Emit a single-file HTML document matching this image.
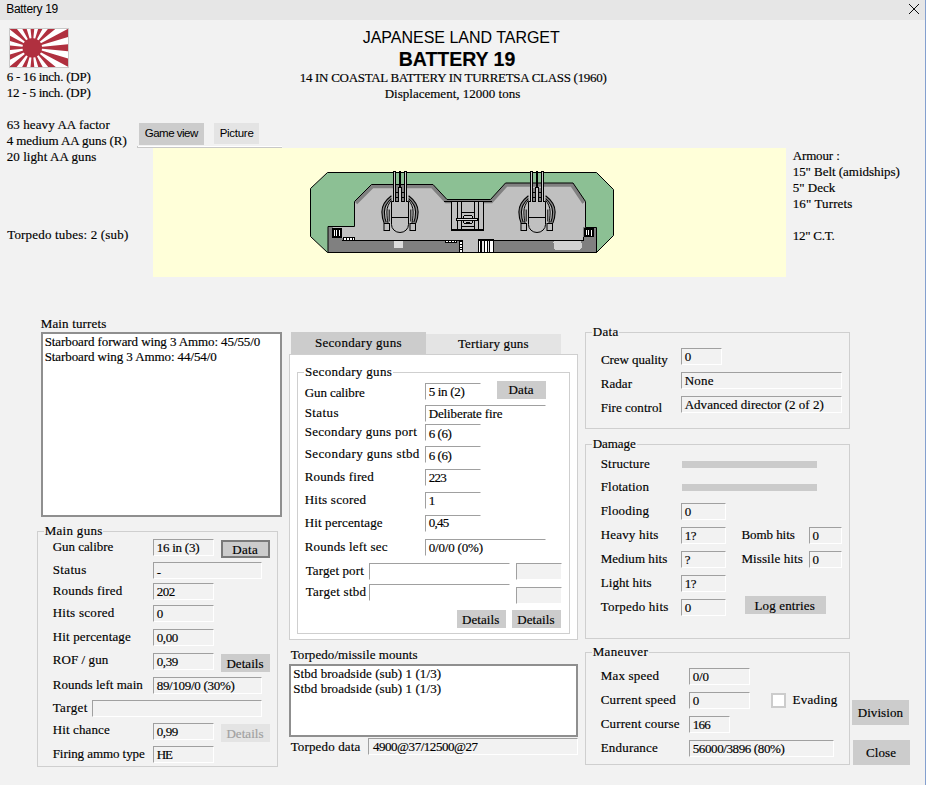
<!DOCTYPE html>
<html><head><meta charset="utf-8"><title>Battery 19</title>
<style>
html,body{margin:0;padding:0;}
body{width:926px;height:785px;overflow:hidden;background:#f2f2f2;}
#win{position:relative;width:926px;height:785px;background:#f2f2f2;overflow:hidden;}
#win div{position:absolute;box-sizing:border-box;}
.t{white-space:pre;color:#000;-webkit-text-stroke:0.16px currentColor;}
.s13{font:13px/16px 'Liberation Serif',serif;height:16px;}
.a12{font:12px/16px 'Liberation Sans',sans-serif;height:16px;-webkit-text-stroke:0;}
.a115{font:11.5px/16px 'Liberation Sans',sans-serif;height:16px;-webkit-text-stroke:0;}
.a16{font:16px/20px 'Liberation Sans',sans-serif;height:20px;-webkit-text-stroke:0;}
.ab20{font:bold 19.5px/24px 'Liberation Sans',sans-serif;height:24px;}
.titlebar{background:#e6e6e6;}
.rborder{background:#84a0cf;}
.grp{border:1px solid #cfcfcf;}
.gap{}
.fld{border:1px solid;border-color:#a0a0a0 #fff #fff #a0a0a0;background:#f2f2f2;}
.fldw{border:1px solid;border-color:#a0a0a0 #fff #fff #a0a0a0;background:#fff;}
.btn{background:#cccccc;}
.btnl{background:#e4e4e4;}
.btnd{background:#cccccc;border:2px solid #7a7a7a;}
.list{background:#fff;border:2px solid #8f8f8f;}
.pane{background:#fff;border:1px solid #cfcfcf;}
.tabsel{background:#cccccc;}
.tab{background:#e4e4e4;}
.bar{background:#cbcbcb;}
.chk{background:#fff;border:2px solid #cccccc;}
.yel{background:#ffffd9;}
.ln{background:#d4d4d4;}
</style></head>
<body>
<div id="win">
<div class="titlebar" style="left:0px;top:0px;width:926px;height:20px;"></div>
<div class="rborder" style="left:925px;top:0px;width:1px;height:785px;"></div>
<div class="btn" style="left:139px;top:123px;width:65px;height:22px;"></div>
<div class="btnl" style="left:214px;top:123px;width:45px;height:21px;"></div>
<div class="ln" style="left:138px;top:146px;width:144px;height:1px;background:#fff;"></div>
<div class="ln" style="left:137px;top:147px;width:145px;height:1px;background:#c8c8c8;"></div>
<div class="ln" style="left:137px;top:146px;width:1px;height:2px;background:#c8c8c8;"></div>
<div class="yel" style="left:153px;top:148px;width:633px;height:129px;"></div>
<div class="list" style="left:41px;top:332px;width:241px;height:185px;"></div>
<div class="list" style="left:289px;top:664px;width:289px;height:73px;"></div>
<div class="grp" style="left:37px;top:531px;width:241px;height:236px;"></div>
<div class="gap" style="left:43.5px;top:530px;width:59.5px;height:3px;background:#f2f2f2;"></div>
<div class="fld" style="left:153px;top:539px;width:61px;height:17px;"></div>
<div class="fld" style="left:153px;top:583px;width:61px;height:17px;"></div>
<div class="fld" style="left:153px;top:605px;width:61px;height:17px;"></div>
<div class="fld" style="left:153px;top:629px;width:61px;height:17px;"></div>
<div class="fld" style="left:153px;top:653px;width:61px;height:17px;"></div>
<div class="fld" style="left:153px;top:723px;width:61px;height:17px;"></div>
<div class="fld" style="left:153px;top:746px;width:61px;height:17px;"></div>
<div class="fld" style="left:153px;top:562px;width:109px;height:17px;"></div>
<div class="fld" style="left:153px;top:677px;width:109px;height:17px;"></div>
<div class="fld" style="left:92px;top:700px;width:170px;height:17px;"></div>
<div class="btnd" style="left:221px;top:540px;width:49px;height:18px;"></div>
<div class="btn" style="left:221px;top:654px;width:49px;height:18px;"></div>
<div class="btnl" style="left:221px;top:724px;width:49px;height:18px;"></div>
<div class="tabsel" style="left:291px;top:332px;width:135px;height:22px;"></div>
<div class="tab" style="left:426px;top:334px;width:135px;height:20px;"></div>
<div class="pane" style="left:289px;top:354px;width:289px;height:286px;"></div>
<div class="grp" style="left:297px;top:372px;width:273px;height:262px;"></div>
<div class="gap" style="left:303.5px;top:371px;width:89px;height:3px;background:#fff;"></div>
<div class="fldw" style="left:425px;top:383px;width:56px;height:17px;"></div>
<div class="fldw" style="left:425px;top:424px;width:56px;height:17px;"></div>
<div class="fldw" style="left:425px;top:446px;width:56px;height:17px;"></div>
<div class="fldw" style="left:425px;top:469px;width:56px;height:17px;"></div>
<div class="fldw" style="left:425px;top:492px;width:56px;height:17px;"></div>
<div class="fldw" style="left:425px;top:515px;width:56px;height:17px;"></div>
<div class="fldw" style="left:425px;top:405px;width:120.5px;height:17px;"></div>
<div class="fldw" style="left:425px;top:539px;width:120.5px;height:17px;"></div>
<div class="fldw" style="left:369px;top:563px;width:141px;height:17px;"></div>
<div class="fldw" style="left:369px;top:584px;width:141px;height:17px;"></div>
<div class="fld" style="left:516px;top:563px;width:45.5px;height:17px;"></div>
<div class="fld" style="left:516px;top:587px;width:45.5px;height:17px;"></div>
<div class="btn" style="left:497px;top:381px;width:48.5px;height:18px;"></div>
<div class="btn" style="left:457px;top:610px;width:49px;height:17.5px;"></div>
<div class="btn" style="left:512px;top:610px;width:49px;height:17.5px;"></div>
<div class="fld" style="left:368px;top:738px;width:210px;height:17px;"></div>
<div class="grp" style="left:585px;top:332px;width:265px;height:97px;"></div>
<div class="gap" style="left:591.5px;top:331px;width:27.5px;height:3px;background:#f2f2f2;"></div>
<div class="grp" style="left:585px;top:444px;width:265px;height:194.5px;"></div>
<div class="gap" style="left:591.5px;top:443px;width:45px;height:3px;background:#f2f2f2;"></div>
<div class="grp" style="left:585px;top:652px;width:265px;height:113px;"></div>
<div class="gap" style="left:591.5px;top:651px;width:57px;height:3px;background:#f2f2f2;"></div>
<div class="fld" style="left:681px;top:348px;width:41px;height:17px;"></div>
<div class="fld" style="left:681px;top:372px;width:161px;height:17px;"></div>
<div class="fld" style="left:681px;top:396px;width:161px;height:17px;"></div>
<div class="bar" style="left:682px;top:460.5px;width:135px;height:7px;"></div>
<div class="bar" style="left:682px;top:483.5px;width:135px;height:7px;"></div>
<div class="fld" style="left:681px;top:503px;width:44.5px;height:17px;"></div>
<div class="fld" style="left:681px;top:527px;width:44.5px;height:17px;"></div>
<div class="fld" style="left:681px;top:551px;width:44.5px;height:17px;"></div>
<div class="fld" style="left:681px;top:575px;width:44.5px;height:17px;"></div>
<div class="fld" style="left:681px;top:599px;width:44.5px;height:17px;"></div>
<div class="fld" style="left:808.5px;top:527px;width:33.5px;height:17px;"></div>
<div class="fld" style="left:808.5px;top:551px;width:33.5px;height:17px;"></div>
<div class="btn" style="left:744.5px;top:596px;width:81.5px;height:17.5px;"></div>
<div class="fld" style="left:689px;top:668px;width:61px;height:17px;"></div>
<div class="fld" style="left:689px;top:692px;width:61px;height:17px;"></div>
<div class="fld" style="left:689px;top:716px;width:41px;height:17px;"></div>
<div class="fld" style="left:689px;top:740px;width:145px;height:17px;"></div>
<div class="chk" style="left:771px;top:693px;width:15px;height:15px;"></div>
<div class="btn" style="left:852px;top:700px;width:57px;height:25px;"></div>
<div class="btn" style="left:853px;top:740px;width:57px;height:25px;"></div>
<svg style="position:absolute;left:9px;top:28px" width="60" height="40" viewBox="9 28 60 40">
<rect x="9" y="28" width="60" height="40" fill="#c9c9c9"/>
<svg x="10" y="29" width="58" height="38" viewBox="10 29 58 38">
<rect x="10" y="29" width="58" height="38" fill="#fff"/>
<g fill="#b0303f"><path d="M32.4 47.8L112.0 40.0L112.0 55.6ZM32.4 47.8L109.0 71.0L103.0 85.5ZM32.4 47.8L94.2 98.6L83.2 109.6ZM32.4 47.8L70.1 118.4L55.6 124.4ZM32.4 47.8L40.2 127.4L24.6 127.4ZM32.4 47.8L9.2 124.4L-5.3 118.4ZM32.4 47.8L-18.4 109.6L-29.4 98.6ZM32.4 47.8L-38.2 85.5L-44.2 71.0ZM32.4 47.8L-47.2 55.6L-47.2 40.0ZM32.4 47.8L-44.2 24.6L-38.2 10.1ZM32.4 47.8L-29.4 -3.0L-18.4 -14.0ZM32.4 47.8L-5.3 -22.8L9.2 -28.8ZM32.4 47.8L24.6 -31.8L40.2 -31.8ZM32.4 47.8L55.6 -28.8L70.1 -22.8ZM32.4 47.8L83.2 -14.0L94.2 -3.0ZM32.4 47.8L103.0 10.1L109.0 24.6Z"/><circle cx="32.3" cy="47.8" r="9.9"/></g>
</svg>
</svg>
<svg id="closex" style="position:absolute;left:905px;top:0px" width="18" height="18" viewBox="905 0 18 18"><path d="M909 4L919 14M919 4L909 14" stroke="#000" stroke-width="0.95" fill="none"/></svg>
<svg style="position:absolute;left:300px;top:164px" width="320" height="96" viewBox="300 164 320 96">
<!-- body -->
<path d="M328 226.5H354.5V201.5L371.5 184.5H433L447 199.5H490.5L505.5 183H573L585.5 201.5V227.5H596.5V252.5H328Z" fill="#c0c0c0"/>
<path d="M354.5 201.5L371.5 184.5H433L447 199.5H490.5L505.5 183H573L585.5 201.5" fill="none" stroke="#808080" stroke-width="7.6"/>
<rect x="328" y="240" width="269" height="13" fill="#808080"/>
<rect x="328" y="226" width="5" height="27" fill="#808080"/>
<rect x="583" y="227" width="14" height="26" fill="#808080"/>
<!-- green emplacement with body-shaped hole -->
<path d="M327.5 172.5H596.5L613.5 189.5V235.5L596.5 252.5H327.5L310.5 236.5V188.5Z M328 226.5H354.5V201.5L371.5 184.5H433L447 199.5H490.5L505.5 183H573L585.5 201.5V227.5H596.5V252.5H328Z" fill="#8cc094" fill-rule="evenodd" stroke="#000" stroke-width="1"/>
<g shape-rendering="crispEdges">
 <!-- base top line -->
 <rect x="342" y="240" width="121" height="1" fill="#000"/>
 <rect x="494" y="240" width="90" height="1" fill="#000"/>
 <rect x="583" y="237" width="1" height="4" fill="#000"/>
 <!-- central passage -->
 <rect x="463" y="240" width="15" height="12" fill="#c0c0c0"/>
 <rect x="462" y="240" width="1" height="12" fill="#000"/>
 <rect x="332" y="238" width="11" height="2" fill="#808080"/>
 <!-- left vent -->
 <rect x="332" y="228" width="10" height="10" fill="#000"/>
 <rect x="334" y="230" width="1" height="6" fill="#fff"/><rect x="336" y="230" width="1" height="6" fill="#fff"/><rect x="339" y="230" width="1" height="6" fill="#fff"/>
 <!-- small squares -->
 <rect x="343" y="237" width="12" height="4" fill="#000"/>
 <rect x="344" y="238" width="2" height="2" fill="#fff"/><rect x="347" y="238" width="2" height="2" fill="#fff"/><rect x="350" y="238" width="2" height="2" fill="#fff"/><rect x="352.6" y="238" width="1.6" height="2" fill="#fff"/>
 <!-- light square in base -->
 <rect x="393.5" y="241" width="9" height="6.5" fill="#dcdcdc"/>
 <!-- center dashes -->
 <rect x="445" y="240" width="12" height="3" fill="#000"/>
 <rect x="446" y="241" width="2" height="1" fill="#fff"/><rect x="449" y="241" width="2" height="1" fill="#fff"/><rect x="452" y="241" width="2" height="1" fill="#fff"/><rect x="455" y="241" width="1" height="1" fill="#fff"/>
 <rect x="459" y="240" width="4" height="12" fill="#000"/>
 <rect x="460" y="242" width="2" height="2" fill="#fff"/><rect x="460" y="245" width="2" height="2" fill="#fff"/><rect x="460" y="248" width="2" height="1" fill="#fff"/><rect x="460" y="250" width="2" height="2" fill="#fff"/>
 <!-- stairs -->
 <rect x="478" y="239" width="16" height="13" fill="#000"/>
 <rect x="479" y="241" width="1" height="11" fill="#fff"/><rect x="482" y="241" width="2" height="11" fill="#e8e8e8"/><rect x="485" y="241" width="2" height="11" fill="#fff"/><rect x="488" y="241" width="1" height="11" fill="#e8e8e8"/><rect x="490" y="241" width="3" height="11" fill="#fff"/>
 <!-- right light rect -->
 <rect x="553.5" y="241" width="28" height="8.5" rx="1.5" fill="#d2d2d2"/>
 <!-- right vent -->
 <rect x="584" y="228" width="10" height="9" fill="#000"/>
 <rect x="586" y="230" width="1" height="5" fill="#fff"/><rect x="588" y="230" width="1" height="5" fill="#fff"/><rect x="591" y="230" width="1" height="6" fill="#fff"/>
 <!-- conning tower -->
 <rect x="444" y="201" width="48" height="1" fill="#000"/>
 <rect x="451" y="202" width="33" height="29" fill="#000"/>
 <rect x="452" y="202" width="5" height="27" fill="#c0c0c0"/>
 <rect x="458" y="202" width="3" height="27" fill="#c0c0c0"/>
 <rect x="475" y="202" width="3" height="27" fill="#c0c0c0"/>
 <rect x="479" y="202" width="4" height="27" fill="#c0c0c0"/>
 <rect x="462" y="202" width="12" height="10" fill="#c0c0c0"/>
 <rect x="462" y="213" width="12" height="13" fill="#c0c0c0"/>
 <rect x="462" y="227" width="12" height="2" fill="#c0c0c0"/>
 <rect x="463" y="215" width="10" height="9" fill="#000"/>
 <rect x="464" y="216" width="8" height="2" fill="#c8c8c8"/>
 <rect x="464" y="221" width="8" height="2" fill="#c0c0c0"/>
 <rect x="466" y="222" width="4" height="1" fill="#000"/>
 <rect x="463" y="215" width="1" height="1" fill="#c0c0c0"/><rect x="472" y="215" width="1" height="1" fill="#c0c0c0"/>
 <rect x="463" y="223" width="1" height="1" fill="#c0c0c0"/><rect x="472" y="223" width="1" height="1" fill="#c0c0c0"/>
 <rect x="456" y="218" width="22" height="3" fill="#000"/>
 <rect x="457" y="219" width="20" height="1" fill="#dcdcdc"/>
</g>
<g transform="translate(400 0)">
 <path d="M-8.6 195.8 C-14.2 200,-18.2 205.5,-18.1 212 C-18 217,-17.3 220,-15.9 223 L-13.7 222.5 C-15 219.5,-15.6 216.5,-15.6 212 C-15.6 206.5,-12.6 202,-8.6 198.6 Z" fill="#8a8a8a" stroke="none"/>
 <path d="M-8.6 195.8 C-14.2 200,-18.2 205.5,-18.1 212 C-18 217,-17.3 220,-15.9 223" fill="none" stroke="#000" stroke-width="1.1"/>
 <path d="M-8.6 198.6 C-12.6 202,-15.6 206.5,-15.6 212 C-15.6 216.5,-15 219.5,-13.7 222.5" fill="none" stroke="#000" stroke-width="1.1"/>
 <path d="M-8.6 200.2 C-11 203,-13.2 207,-13.1 212 C-13 216.5,-12.7 220,-12 223" fill="none" stroke="#000" stroke-width="1"/>
 <path d="M-10.8 209.5 V221.5" fill="none" stroke="#000" stroke-width="1"/>
 <path d="M8.6 195.8 C14.2 200,18.2 205.5,18.1 212 C18 217,17.3 220,15.9 223 L13.7 222.5 C15 219.5,15.6 216.5,15.6 212 C15.6 206.5,12.6 202,8.6 198.6 Z" fill="#8a8a8a" stroke="none"/>
 <path d="M8.6 195.8 C14.2 200,18.2 205.5,18.1 212 C18 217,17.3 220,15.9 223" fill="none" stroke="#000" stroke-width="1.1"/>
 <path d="M8.6 198.6 C12.6 202,15.6 206.5,15.6 212 C15.6 216.5,15 219.5,13.7 222.5" fill="none" stroke="#000" stroke-width="1.1"/>
 <path d="M8.6 200.2 C11 203,13.2 207,13.1 212 C13 216.5,12.7 220,12 223" fill="none" stroke="#000" stroke-width="1"/>
 <path d="M10.8 209.5 V221.5" fill="none" stroke="#000" stroke-width="1"/>
 <rect x="-16" y="223.5" width="5.5" height="7" fill="#c0c0c0" stroke="#000" stroke-width="1"/>
 <rect x="10" y="223.5" width="5.5" height="7" fill="#c0c0c0" stroke="#000" stroke-width="1"/>
 <path d="M-8.5 201.5H8.5V224.5A8.5 8 0 0 1 -8.5 224.5Z" fill="#c0c0c0" stroke="#000" stroke-width="1"/>
 <path d="M-8.5 217.5H8.5" stroke="#000" stroke-width="1"/>
 <g shape-rendering="crispEdges">
 <rect x="-7" y="171" width="3" height="30.5" fill="#000"/><rect x="-6" y="172" width="1" height="29.5" fill="#c8c8c8"/>
 <rect x="-1" y="171" width="2" height="17" fill="#000"/>
 <rect x="-2" y="187" width="4" height="14.5" fill="#000"/><rect x="-1" y="188" width="2" height="13.5" fill="#c8c8c8"/>
 <rect x="4" y="171" width="3" height="30.5" fill="#000"/><rect x="5" y="172" width="1" height="29.5" fill="#c8c8c8"/>
 <rect x="-4" y="188" width="2" height="13" fill="#808080"/><rect x="2" y="188" width="2" height="13" fill="#808080"/>
 <rect x="-4" y="192" width="2" height="1" fill="#000"/><rect x="2" y="192" width="2" height="1" fill="#000"/>
 <rect x="-4" y="197" width="2" height="1" fill="#000"/><rect x="2" y="197" width="2" height="1" fill="#000"/>
 </g>
</g>
<g transform="translate(537 0)">
 <path d="M-8.6 195.8 C-14.2 200,-18.2 205.5,-18.1 212 C-18 217,-17.3 220,-15.9 223 L-13.7 222.5 C-15 219.5,-15.6 216.5,-15.6 212 C-15.6 206.5,-12.6 202,-8.6 198.6 Z" fill="#8a8a8a" stroke="none"/>
 <path d="M-8.6 195.8 C-14.2 200,-18.2 205.5,-18.1 212 C-18 217,-17.3 220,-15.9 223" fill="none" stroke="#000" stroke-width="1.1"/>
 <path d="M-8.6 198.6 C-12.6 202,-15.6 206.5,-15.6 212 C-15.6 216.5,-15 219.5,-13.7 222.5" fill="none" stroke="#000" stroke-width="1.1"/>
 <path d="M-8.6 200.2 C-11 203,-13.2 207,-13.1 212 C-13 216.5,-12.7 220,-12 223" fill="none" stroke="#000" stroke-width="1"/>
 <path d="M-10.8 209.5 V221.5" fill="none" stroke="#000" stroke-width="1"/>
 <path d="M8.6 195.8 C14.2 200,18.2 205.5,18.1 212 C18 217,17.3 220,15.9 223 L13.7 222.5 C15 219.5,15.6 216.5,15.6 212 C15.6 206.5,12.6 202,8.6 198.6 Z" fill="#8a8a8a" stroke="none"/>
 <path d="M8.6 195.8 C14.2 200,18.2 205.5,18.1 212 C18 217,17.3 220,15.9 223" fill="none" stroke="#000" stroke-width="1.1"/>
 <path d="M8.6 198.6 C12.6 202,15.6 206.5,15.6 212 C15.6 216.5,15 219.5,13.7 222.5" fill="none" stroke="#000" stroke-width="1.1"/>
 <path d="M8.6 200.2 C11 203,13.2 207,13.1 212 C13 216.5,12.7 220,12 223" fill="none" stroke="#000" stroke-width="1"/>
 <path d="M10.8 209.5 V221.5" fill="none" stroke="#000" stroke-width="1"/>
 <rect x="-16" y="223.5" width="5.5" height="7" fill="#c0c0c0" stroke="#000" stroke-width="1"/>
 <rect x="10" y="223.5" width="5.5" height="7" fill="#c0c0c0" stroke="#000" stroke-width="1"/>
 <path d="M-8.5 201.5H8.5V224.5A8.5 8 0 0 1 -8.5 224.5Z" fill="#c0c0c0" stroke="#000" stroke-width="1"/>
 <path d="M-8.5 217.5H8.5" stroke="#000" stroke-width="1"/>
 <g shape-rendering="crispEdges">
 <rect x="-7" y="171" width="3" height="30.5" fill="#000"/><rect x="-6" y="172" width="1" height="29.5" fill="#c8c8c8"/>
 <rect x="-1" y="171" width="2" height="17" fill="#000"/>
 <rect x="-2" y="187" width="4" height="14.5" fill="#000"/><rect x="-1" y="188" width="2" height="13.5" fill="#c8c8c8"/>
 <rect x="4" y="171" width="3" height="30.5" fill="#000"/><rect x="5" y="172" width="1" height="29.5" fill="#c8c8c8"/>
 <rect x="-4" y="188" width="2" height="13" fill="#808080"/><rect x="2" y="188" width="2" height="13" fill="#808080"/>
 <rect x="-4" y="192" width="2" height="1" fill="#000"/><rect x="2" y="192" width="2" height="1" fill="#000"/>
 <rect x="-4" y="197" width="2" height="1" fill="#000"/><rect x="2" y="197" width="2" height="1" fill="#000"/>
 </g>
</g>
</svg>

<div class="t a12" style="left:6.20px;top:1px;letter-spacing:-0.289px;">Battery 19</div>
<div class="t s13" style="left:6.70px;top:69px;letter-spacing:-0.228px;">6 - 16 inch. (DP)</div>
<div class="t s13" style="left:6.70px;top:85px;letter-spacing:-0.228px;">12 - 5 inch. (DP)</div>
<div class="t s13" style="left:6.70px;top:117px;letter-spacing:0.097px;">63 heavy AA factor</div>
<div class="t s13" style="left:6.70px;top:133px;letter-spacing:-0.065px;">4 medium AA guns (R)</div>
<div class="t s13" style="left:6.70px;top:149px;letter-spacing:0.073px;">20 light AA guns</div>
<div class="t s13" style="left:7.20px;top:227px;letter-spacing:0.188px;">Torpedo tubes: 2 (sub)</div>
<div class="t a16" style="left:362.70px;top:28px;letter-spacing:-0.015px;">JAPANESE LAND TARGET</div>
<div class="t ab20" style="left:398.70px;top:47px;letter-spacing:-0.008px;">BATTERY 19</div>
<div class="t s13" style="left:299.70px;top:70px;letter-spacing:-0.292px;">14 IN COASTAL BATTERY IN TURRETSA CLASS (1960)</div>
<div class="t s13" style="left:384.70px;top:86px;letter-spacing:0.008px;">Displacement, 12000 tons</div>
<div class="t a115" style="left:144.70px;top:125px;letter-spacing:-0.491px;">Game view</div>
<div class="t a115" style="left:219.70px;top:125px;letter-spacing:-0.283px;">Picture</div>
<div class="t s13" style="left:792.70px;top:148px;letter-spacing:-0.133px;">Armour :</div>
<div class="t s13" style="left:792.70px;top:164px;letter-spacing:-0.040px;">15" Belt (amidships)</div>
<div class="t s13" style="left:792.70px;top:180px;letter-spacing:0.017px;">5" Deck</div>
<div class="t s13" style="left:792.70px;top:196px;letter-spacing:0.119px;">16" Turrets</div>
<div class="t s13" style="left:792.70px;top:228px;letter-spacing:-0.231px;">12" C.T.</div>
<div class="t s13" style="left:40.70px;top:316px;letter-spacing:0.154px;">Main turrets</div>
<div class="t s13" style="left:44.70px;top:334px;letter-spacing:-0.097px;">Starboard forward wing 3 Ammo: 45/55/0</div>
<div class="t s13" style="left:44.70px;top:349px;letter-spacing:-0.092px;">Starboard wing 3 Ammo: 44/54/0</div>
<div class="t s13" style="left:44.70px;top:523px;letter-spacing:0.294px;">Main guns</div>
<div class="t s13" style="left:52.70px;top:539px;letter-spacing:-0.042px;">Gun calibre</div>
<div class="t s13" style="left:52.70px;top:562px;letter-spacing:0.361px;">Status</div>
<div class="t s13" style="left:52.70px;top:583px;letter-spacing:0.188px;">Rounds fired</div>
<div class="t s13" style="left:52.70px;top:605px;letter-spacing:0.274px;">Hits scored</div>
<div class="t s13" style="left:52.70px;top:629px;letter-spacing:0.150px;">Hit percentage</div>
<div class="t s13" style="left:52.70px;top:652px;letter-spacing:0.087px;">ROF / gun</div>
<div class="t s13" style="left:52.70px;top:677px;letter-spacing:0.037px;">Rounds left main</div>
<div class="t s13" style="left:52.70px;top:700px;letter-spacing:0.364px;">Target</div>
<div class="t s13" style="left:52.70px;top:722px;letter-spacing:0.127px;">Hit chance</div>
<div class="t s13" style="left:52.70px;top:746px;letter-spacing:-0.071px;">Firing ammo type</div>
<div class="t s13" style="left:156.70px;top:540px;letter-spacing:-0.241px;">16 in (3)</div>
<div class="t s13" style="left:156.70px;top:565px;">-</div>
<div class="t s13" style="left:156.70px;top:584px;letter-spacing:-0.450px;">202</div>
<div class="t s13" style="left:156.70px;top:606px;">0</div>
<div class="t s13" style="left:156.70px;top:630px;letter-spacing:-0.383px;">0,00</div>
<div class="t s13" style="left:156.70px;top:654px;letter-spacing:-0.383px;">0,39</div>
<div class="t s13" style="left:156.70px;top:678px;letter-spacing:-0.298px;">89/109/0 (30%)</div>
<div class="t s13" style="left:156.70px;top:724px;letter-spacing:-0.383px;">0,99</div>
<div class="t s13" style="left:156.70px;top:747px;letter-spacing:-1.200px;">HE</div>
<div class="t s13" style="left:232.20px;top:542px;letter-spacing:0.351px;">Data</div>
<div class="t s13" style="left:226.45px;top:656px;letter-spacing:0.045px;">Details</div>
<div class="t s13" style="left:226.45px;top:726px;letter-spacing:0.045px;color:#a0a0a0;">Details</div>
<div class="t s13" style="left:314.95px;top:335px;letter-spacing:0.301px;">Secondary guns</div>
<div class="t s13" style="left:457.90px;top:336px;letter-spacing:0.157px;">Tertiary guns</div>
<div class="t s13" style="left:304.95px;top:364px;letter-spacing:0.320px;">Secondary guns</div>
<div class="t s13" style="left:304.70px;top:385px;letter-spacing:-0.092px;">Gun calibre</div>
<div class="t s13" style="left:304.70px;top:405px;letter-spacing:0.411px;">Status</div>
<div class="t s13" style="left:304.70px;top:424px;letter-spacing:0.290px;">Secondary guns port</div>
<div class="t s13" style="left:304.70px;top:446px;letter-spacing:0.388px;">Secondary guns stbd</div>
<div class="t s13" style="left:304.70px;top:469px;letter-spacing:0.143px;">Rounds fired</div>
<div class="t s13" style="left:304.70px;top:492px;letter-spacing:0.249px;">Hits scored</div>
<div class="t s13" style="left:304.70px;top:515px;letter-spacing:0.130px;">Hit percentage</div>
<div class="t s13" style="left:304.70px;top:539px;letter-spacing:0.192px;">Rounds left sec</div>
<div class="t s13" style="left:305.70px;top:563px;letter-spacing:0.112px;">Target port</div>
<div class="t s13" style="left:305.70px;top:584px;letter-spacing:0.265px;">Target stbd</div>
<div class="t s13" style="left:428.70px;top:384px;letter-spacing:-0.312px;">5 in (2)</div>
<div class="t s13" style="left:428.70px;top:406px;letter-spacing:-0.113px;">Deliberate fire</div>
<div class="t s13" style="left:428.70px;top:426px;letter-spacing:-0.455px;">6 (6)</div>
<div class="t s13" style="left:428.70px;top:448px;letter-spacing:-0.455px;">6 (6)</div>
<div class="t s13" style="left:428.70px;top:470px;letter-spacing:-0.700px;">223</div>
<div class="t s13" style="left:428.70px;top:493px;">1</div>
<div class="t s13" style="left:428.70px;top:515px;letter-spacing:-0.717px;">0,45</div>
<div class="t s13" style="left:428.70px;top:540px;letter-spacing:-0.180px;">0/0/0 (0%)</div>
<div class="t s13" style="left:508.45px;top:382px;letter-spacing:0.184px;">Data</div>
<div class="t s13" style="left:461.95px;top:612px;letter-spacing:0.087px;">Details</div>
<div class="t s13" style="left:517.20px;top:612px;letter-spacing:0.087px;">Details</div>
<div class="t s13" style="left:290.70px;top:647px;letter-spacing:0.082px;">Torpedo/missile mounts</div>
<div class="t s13" style="left:293.20px;top:666px;letter-spacing:0.073px;">Stbd broadside (sub) 1 (1/3)</div>
<div class="t s13" style="left:293.20px;top:681px;letter-spacing:0.073px;">Stbd broadside (sub) 1 (1/3)</div>
<div class="t s13" style="left:290.70px;top:739px;letter-spacing:0.141px;">Torpedo data</div>
<div class="t s13" style="left:372.95px;top:739px;letter-spacing:-0.464px;">4900@37/12500@27</div>
<div class="t s13" style="left:592.70px;top:324px;letter-spacing:0.351px;">Data</div>
<div class="t s13" style="left:600.95px;top:352px;letter-spacing:-0.061px;">Crew quality</div>
<div class="t s13" style="left:600.70px;top:376px;letter-spacing:0.076px;">Radar</div>
<div class="t s13" style="left:600.70px;top:400px;letter-spacing:0.030px;">Fire control</div>
<div class="t s13" style="left:684.70px;top:349px;">0</div>
<div class="t s13" style="left:684.70px;top:373px;letter-spacing:0.226px;">None</div>
<div class="t s13" style="left:684.70px;top:397px;letter-spacing:0.020px;">Advanced director (2 of 2)</div>
<div class="t s13" style="left:592.70px;top:436px;letter-spacing:-0.042px;">Damage</div>
<div class="t s13" style="left:600.70px;top:456px;letter-spacing:0.180px;">Structure</div>
<div class="t s13" style="left:600.70px;top:479px;letter-spacing:0.175px;">Flotation</div>
<div class="t s13" style="left:600.70px;top:503px;letter-spacing:0.197px;">Flooding</div>
<div class="t s13" style="left:600.70px;top:527px;letter-spacing:0.181px;">Heavy hits</div>
<div class="t s13" style="left:600.70px;top:551px;letter-spacing:0.051px;">Medium hits</div>
<div class="t s13" style="left:600.70px;top:575px;letter-spacing:0.072px;">Light hits</div>
<div class="t s13" style="left:600.70px;top:599px;letter-spacing:0.221px;">Torpedo hits</div>
<div class="t s13" style="left:684.70px;top:504px;">0</div>
<div class="t s13" style="left:684.70px;top:528px;letter-spacing:-0.431px;">1?</div>
<div class="t s13" style="left:684.70px;top:552px;">?</div>
<div class="t s13" style="left:684.70px;top:576px;letter-spacing:-0.431px;">1?</div>
<div class="t s13" style="left:684.70px;top:600px;">0</div>
<div class="t s13" style="left:741.45px;top:527px;letter-spacing:-0.060px;">Bomb hits</div>
<div class="t s13" style="left:741.45px;top:551px;letter-spacing:0.093px;">Missile hits</div>
<div class="t s13" style="left:812.45px;top:528px;">0</div>
<div class="t s13" style="left:812.45px;top:552px;">0</div>
<div class="t s13" style="left:754.45px;top:598px;letter-spacing:0.151px;">Log entries</div>
<div class="t s13" style="left:592.70px;top:644px;letter-spacing:0.342px;">Maneuver</div>
<div class="t s13" style="left:600.70px;top:668px;letter-spacing:0.208px;">Max speed</div>
<div class="t s13" style="left:600.70px;top:692px;letter-spacing:0.211px;">Current speed</div>
<div class="t s13" style="left:600.70px;top:716px;letter-spacing:0.151px;">Current course</div>
<div class="t s13" style="left:600.70px;top:740px;letter-spacing:0.188px;">Endurance</div>
<div class="t s13" style="left:692.70px;top:669px;letter-spacing:-0.137px;">0/0</div>
<div class="t s13" style="left:692.70px;top:693px;">0</div>
<div class="t s13" style="left:692.70px;top:717px;letter-spacing:-0.700px;">166</div>
<div class="t s13" style="left:692.70px;top:741px;letter-spacing:-0.384px;">56000/3896 (80%)</div>
<div class="t s13" style="left:792.50px;top:692px;letter-spacing:0.245px;">Evading</div>
<div class="t s13" style="left:857.70px;top:705px;letter-spacing:0.072px;">Division</div>
<div class="t s13" style="left:865.90px;top:745px;letter-spacing:0.119px;">Close</div>
</div>
</body></html>
